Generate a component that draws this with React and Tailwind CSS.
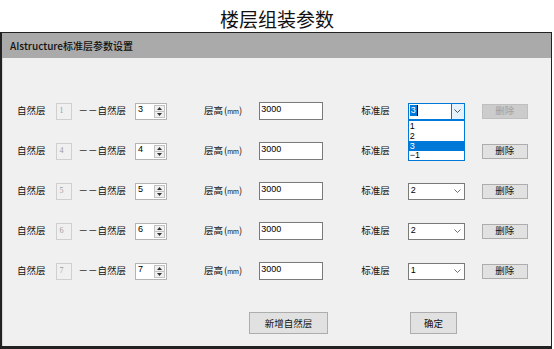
import React from "react";

const CJK = { fontFamily: '"Noto Sans CJK SC", "Noto Sans", sans-serif' };
const NUM = { fontFamily: '"Liberation Sans", "Noto Sans CJK SC", sans-serif' };

function Chevron({ color = "#606060" }) {
  return (
    <svg width="7" height="4" viewBox="0 0 7 4">
      <polyline points="0.5,0.5 3.5,3.5 6.5,0.5" fill="none" stroke={color} strokeWidth="0.9" />
    </svg>
  );
}

function Spinner({ value }) {
  return (
    <div className="ml-[9px] flex h-[17px] w-[32px] border border-[#b4b4b4] bg-white">
      <div className="flex-1 pl-[2px] text-[9px] leading-[11px] text-black" style={NUM}>
        {value}
      </div>
      <div className="my-[1px] mr-[1px] flex w-[11px] flex-col border border-[#c4c4c4] bg-[#f0f0f0]">
        <div className="flex flex-1 items-center justify-center border-b border-[#c4c4c4]">
          <svg width="5" height="3" viewBox="0 0 5 3">
            <polygon points="0,3 5,3 2.5,0" fill="#333" />
          </svg>
        </div>
        <div className="flex flex-1 items-center justify-center">
          <svg width="5" height="3" viewBox="0 0 5 3">
            <polygon points="0,0 5,0 2.5,3" fill="#333" />
          </svg>
        </div>
      </div>
    </div>
  );
}

function Select({ value, open, hidden }) {
  if (open) {
    return (
      <div className="relative ml-[18px] flex h-[17px] w-[57px] border border-[#0078d7] bg-white">
        <div className="flex flex-1 items-start pl-[1px] pt-[1px]">
          <span className="bg-[#0078d7] px-[1px] text-[9px] leading-[11px] text-white" style={NUM}>
            {value}
          </span>
          <span className="h-[11px] w-[1px] bg-black" />
        </div>
        <div className="flex w-[13px] items-center justify-center border-l border-[#0078d7] bg-[#e5f1fb]">
          <Chevron color="#404040" />
        </div>
        <div className="absolute left-[-1px] top-[16px] z-10 w-[57px] border border-[#0078d7] bg-white text-[9px] text-black" style={NUM}>
          <div className="h-[10px] pl-[1px] leading-[10px]">1</div>
          <div className="h-[10px] pl-[1px] leading-[10px]">2</div>
          <div className="h-[10px] bg-[#0078d7] pl-[1px] leading-[10px] text-white">3</div>
          <div className="h-[9px] pl-[1px] leading-[9px]">−1</div>
        </div>
      </div>
    );
  }
  return (
    <div className={`ml-[18px] flex h-[17px] w-[57px] border border-[#7a7a7a] bg-white ${hidden ? "invisible" : ""}`}>
      <div className="flex-1 pl-[2px] pt-[1px] text-[9px] leading-[11px] text-black" style={NUM}>
        {value}
      </div>
      <div className="flex w-[13px] items-center justify-center">
        <Chevron />
      </div>
    </div>
  );
}

function Row({ from, to, std, first, covered }) {
  return (
    <div className="flex h-[18px] items-center pl-[14px] text-[9.5px] leading-none text-[#111]" style={CJK}>
      <span className="whitespace-nowrap">自然层</span>
      <div
        className="ml-[10px] h-[17px] w-[16px] border border-[#cfcfcf] bg-[#f0f0f0] pl-[3px] pt-[2px] text-[8px] leading-[10px] text-[#9a9a9a]"
        style={{ fontFamily: '"Liberation Serif", serif' }}
      >
        {from}
      </div>
      <span className="ml-[7px] whitespace-nowrap">－－自然层</span>
      <Spinner value={to} />
      <span className="ml-[37px] flex items-center whitespace-nowrap">
        层高<span className="ml-[1px]">(</span>
        <span className="text-[7px]" style={NUM}>mm</span>
        <span>)</span>
      </span>
      <div className="ml-[17px] h-[18px] w-[64px] border border-[#7a7a7a] bg-white pl-[1px] pt-[1px] text-[9px] leading-[11px] text-black" style={NUM}>
        3000
      </div>
      <span className="ml-[38px] whitespace-nowrap">标准层</span>
      <Select value={std} open={first} hidden={covered} />
      {first ? (
        <div className="ml-[17px] flex h-[15px] w-[46px] items-center justify-center border border-[#bfbfbf] bg-[#cccccc] text-[9.5px] text-[#a0a0a0]">
          删除
        </div>
      ) : (
        <div className="ml-[17px] flex h-[15px] w-[46px] items-center justify-center border border-[#adadad] bg-[#e1e1e1] text-[9.5px] text-[#111]">
          删除
        </div>
      )}
    </div>
  );
}

export default function App() {
  const rows = [
    { from: "1", to: "3", std: "3", first: true },
    { from: "4", to: "4", std: "2", covered: true },
    { from: "5", to: "5", std: "2" },
    { from: "6", to: "6", std: "2" },
    { from: "7", to: "7", std: "1" },
  ];
  return (
    <div className="h-[349px] w-[554px] bg-white" style={CJK}>
      <div className="flex h-[32px] items-center justify-center pt-[4px] text-[19px] leading-none text-[#111]">
        楼层组装参数
      </div>
      <div className="flex h-[317px] w-[552px] flex-col border-b-[3px] border-l-[2px] border-r-[1px] border-t border-[#222]">
        <div className="flex h-[25px] items-center bg-[#aaaaaa] pl-[8px] text-[10px] font-medium text-[#111]">
          AIstructure标准层参数设置
        </div>
        <div className="flex flex-1 flex-col gap-[22px] border-l border-[#d6d6d6] bg-[#f0f0f0] pt-[44px]">
          {rows.map((r, i) => (
            <Row key={i} {...r} />
          ))}
          <div className="mt-[10px] flex text-[9.5px] text-[#111]">
            <div className="ml-[246px] flex h-[22px] w-[79px] items-center justify-center border border-[#adadad] bg-[#e1e1e1]">
              新增自然层
            </div>
            <div className="ml-[82px] flex h-[22px] w-[47px] items-center justify-center border border-[#adadad] bg-[#e1e1e1]">
              确定
            </div>
          </div>
        </div>
      </div>
    </div>
  );
}
